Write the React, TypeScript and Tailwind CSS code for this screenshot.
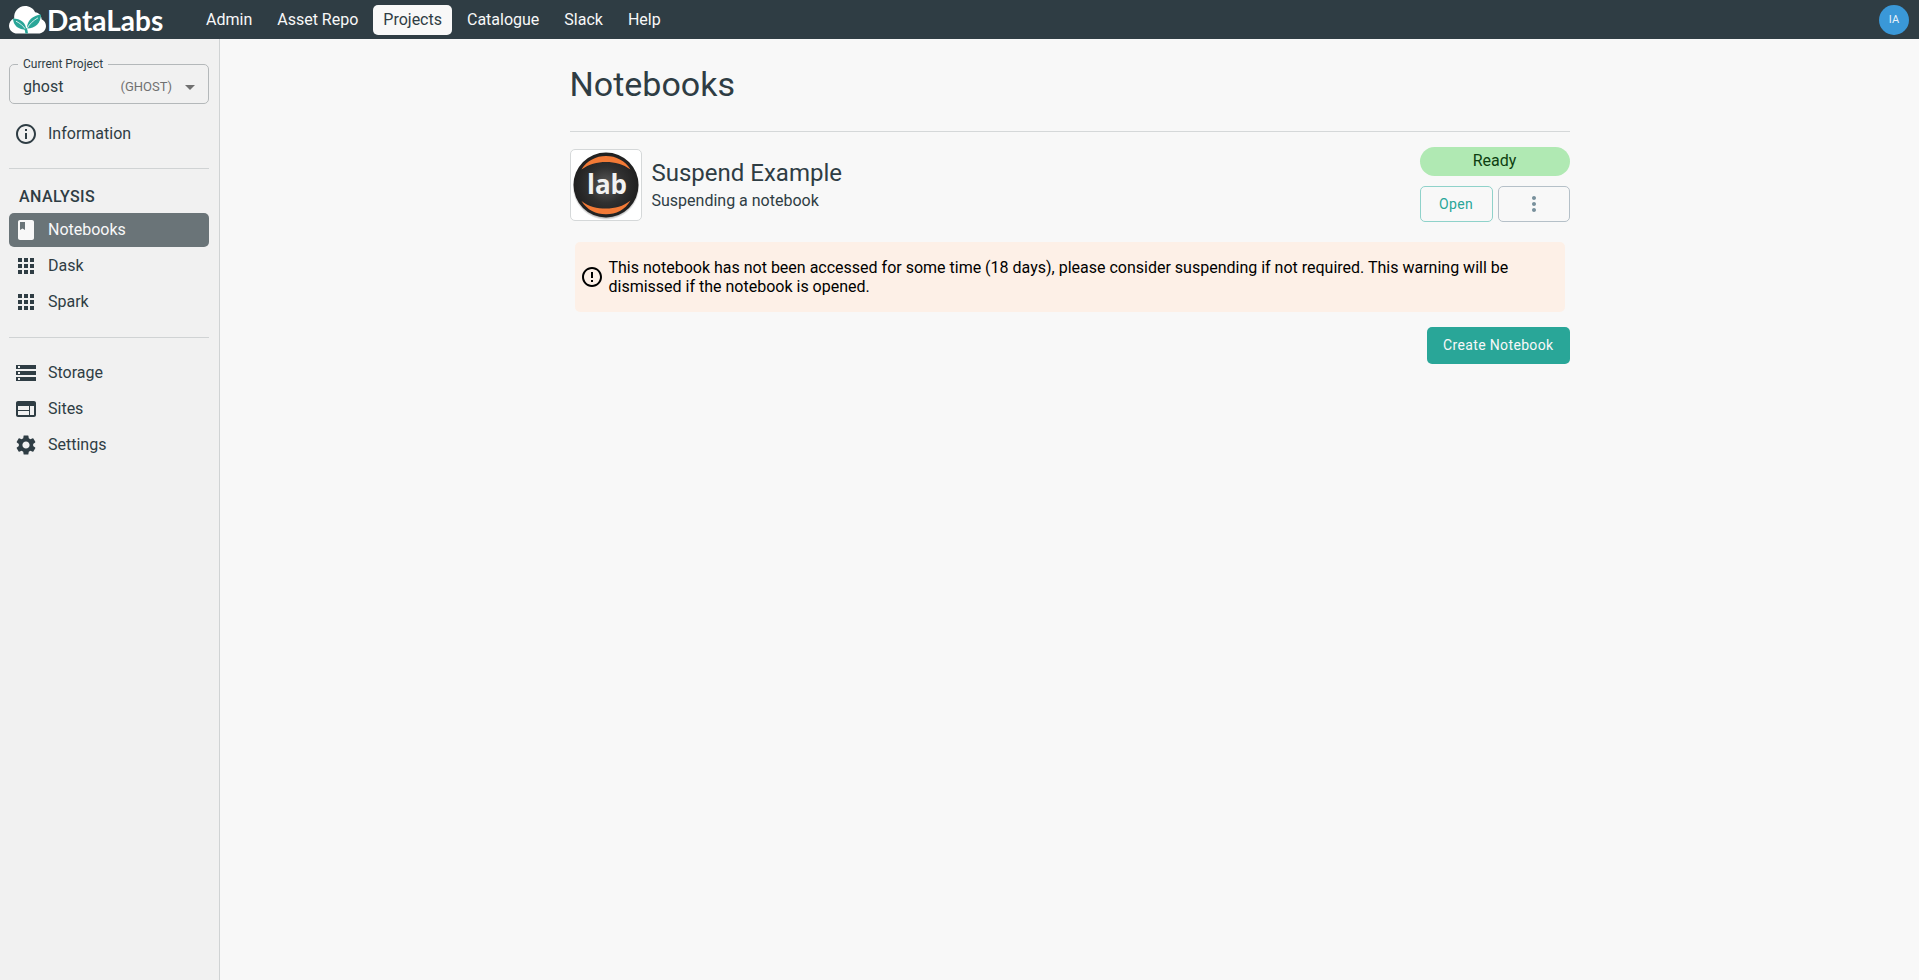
import React from "react";
import {
  MdApps,
  MdArrowDropDown,
  MdBook,
  MdErrorOutline,
  MdInfoOutline,
  MdMoreVert,
  MdSettings,
  MdStorage,
  MdWeb,
} from "react-icons/md";
import type { IconType } from "react-icons";

const topLinks = ["Admin", "Asset Repo", "Projects", "Catalogue", "Slack", "Help"];

function DataLabsLogo() {
  return (
    <a href="#home" aria-label="DataLabs" className="flex h-full w-[186px] shrink-0 items-center pl-[9px]">
      <svg viewBox="0 0 37 28" className="h-7 w-[37px] shrink-0" aria-hidden="true">
        <path
          fill="#fff"
          d="M8.5 27.6C3.7 27.6 0 24.200 0 19.800c0-3.600 2.100-6.300 5.200-7.400C4.600 5.600 9.300 0 16 0c4.600 0 8.300 2.300 10.100 6.200 3.900.4 6.400 3.300 6.500 7C35.400 14.500 37 17 37 20c0 4.300-3.400 7.600-8 7.600z"
        />
        <path fill="#29a698" d="M4 12.500c7.500.2 13 3.800 13.200 11.300C9.500 23.600 4.500 20 4 12.500z" />
        <path fill="#29a698" d="M32 8.500C24 9.700 17.800 14 18 22.600 26.500 22.400 31.800 17 32 8.500z" />
        <path d="M7 15.200c4 2 7.500 4.800 10 8.600M29 11.800c-5 3-8.500 6-11 10.800" stroke="#fff" strokeWidth=".8" fill="none" />
        <path d="M16.400 22.500c.9 1.500 1.300 3 1.300 5.100" stroke="#29a698" strokeWidth="2.600" fill="none" />
      </svg>
      <span className="ml-[1px] font-[Lato,sans-serif] text-[28px] font-bold leading-[30px] text-white">DataLabs</span>
    </a>
  );
}

function TopBar() {
  return (
    <header className="flex h-[39px] items-center bg-[#2f3d44] pr-[10px]">
      <DataLabsLogo />
      <nav aria-label="Main" className="ml-[10px] flex flex-1 items-center gap-[5px]">
        {topLinks.map((name) => (
          <a
            key={name}
            href={"#" + name.toLowerCase().replace(" ", "-")}
            aria-current={name === "Projects" ? "page" : undefined}
            className={
              name === "Projects"
                ? "rounded-[5px] bg-[#f8f8f8] px-[10px] py-[5px] leading-5 text-[#2f3d44]"
                : "rounded-[5px] px-[10px] py-[5px] leading-5 text-[#f8f8f8]"
            }
          >
            {name}
          </a>
        ))}
      </nav>
      <button
        type="button"
        aria-label="Account"
        className="flex size-[30px] items-center justify-center rounded-full bg-[#3a98d8] text-[11px] leading-[30px] text-[#e8f2fa]"
      >
        IA
      </button>
    </header>
  );
}

function SideLink({ icon: Icon, name, active = false }: { icon: IconType; name: string; active?: boolean }) {
  return (
    <a
      href={"#" + name.toLowerCase()}
      aria-current={active ? "page" : undefined}
      className={
        active
          ? "flex h-[34px] items-center gap-[10px] rounded-[5px] bg-[#6a7478] px-[5px] text-[#f8f8f8]"
          : "flex h-[34px] items-center gap-[10px] rounded-[5px] px-[5px] text-[#2f3d44]"
      }
    >
      <Icon className="size-6 shrink-0" aria-hidden="true" />
      <span className="leading-5">{name}</span>
    </a>
  );
}

function ProjectSelect() {
  return (
    <fieldset className="relative rounded-[5px] border border-[#b4b8ba] pl-2">
      <legend className="px-[5px] text-[12px] leading-[13px] text-[#2f3d44]">
        <label htmlFor="project">Current Project</label>
      </legend>
      <select
        id="project"
        defaultValue="ghost"
        className="h-8 w-full appearance-none bg-transparent pl-[5px] text-base text-[#2f3d44] outline-none"
      >
        <option value="ghost">ghost</option>
      </select>
      <span className="pointer-events-none absolute inset-y-0 right-[6px] flex items-center gap-[6px] text-[#707070]">
        <span className="text-[13px] leading-4">(GHOST)</span>
        <MdArrowDropDown className="size-6" aria-hidden="true" />
      </span>
    </fieldset>
  );
}

function Sidebar() {
  return (
    <aside className="w-[220px] shrink-0 border-r border-[#d0d3d4] bg-[#f1f1f1] pl-[9px] pr-[10px] pt-[19px]">
      <ProjectSelect />
      <nav aria-label="Project">
        <div className="pb-[17px] pt-[13px]">
          <SideLink icon={MdInfoOutline} name="Information" />
        </div>
        <div className="border-t border-[#d0d3d4] pb-[18px] pt-[17px]">
          <h2 className="pb-[6px] pl-[10px] font-medium leading-[21px] tracking-wide text-[#2f3d44]">ANALYSIS</h2>
          <div className="flex flex-col gap-[2px]">
            <SideLink icon={MdBook} name="Notebooks" active />
            <SideLink icon={MdApps} name="Dask" />
            <SideLink icon={MdApps} name="Spark" />
          </div>
        </div>
        <div className="flex flex-col gap-[2px] border-t border-[#d0d3d4] pt-[18px]">
          <SideLink icon={MdStorage} name="Storage" />
          <SideLink icon={MdWeb} name="Sites" />
          <SideLink icon={MdSettings} name="Settings" />
        </div>
      </nav>
    </aside>
  );
}

function JupyterLabLogo() {
  return (
    <svg viewBox="0 0 70 70" className="size-full" role="img" aria-label="JupyterLab">
      <defs>
        <radialGradient id="disc">
          <stop offset="0" stopColor="#5a5a5a" />
          <stop offset=".55" stopColor="#303030" />
          <stop offset="1" stopColor="#202020" />
        </radialGradient>
        <radialGradient id="shade">
          <stop offset=".88" stopColor="#888" />
          <stop offset="1" stopColor="#fff" />
        </radialGradient>
      </defs>
      <circle cx="35" cy="36.500" r="33.500" fill="url(#shade)" />
      <circle cx="35" cy="35" r="32.500" fill="url(#disc)" />
      <path d="M10.500 19.500C16 10.500 25 6 35 6s19 4.500 24.500 13.500C52 14.200 44 12 35 12s-17 2.200-24.500 7.500z" fill="#f37a36" />
      <path d="M10.500 51C16 60 25 64.300 35 64.300S54 60 59.500 50.500C52 56.500 44 58.500 35 58.500s-17-1.500-24.500-7.500z" fill="#f37a36" />
      <text x="36" y="44" textAnchor="middle" fill="#f2f2f2" className="font-['Open_Sans',sans-serif] text-[26px] font-bold">
        lab
      </text>
    </svg>
  );
}

function NotebookRow() {
  return (
    <li>
      <div className="flex items-center justify-between pt-[15px]">
        <div className="flex items-center gap-[10px]">
          <div className="size-[72px] shrink-0 rounded-[5px] border border-[#d5d8d9] bg-white">
            <JupyterLabLogo />
          </div>
          <div className="text-[#2f3d44]">
            <h2 className="text-2xl leading-8">Suspend Example</h2>
            <p className="leading-6">Suspending a notebook</p>
          </div>
        </div>
        <div className="w-[150px] shrink-0">
          <div className="h-[29px] rounded-full bg-[#b0e9b3] text-center leading-[27px] text-[#0d3f10]">Ready</div>
          <div className="mt-[10px] grid grid-cols-[73px_72px] gap-[5px]">
            <button
              type="button"
              className="h-9 rounded-[5px] border border-[#8fd2ca] text-sm font-normal tracking-wide text-[#29a698]"
            >
              Open
            </button>
            <button
              type="button"
              aria-label="More actions"
              className="flex h-9 items-center justify-center rounded-[5px] border border-[#b5c0c8] text-[#78909c]"
            >
              <MdMoreVert className="size-6" aria-hidden="true" />
            </button>
          </div>
        </div>
      </div>
      <div
        role="alert"
        className="mx-[5px] mt-5 flex h-[70px] items-center gap-[5px] rounded-[5px] bg-[#fdf0e7] px-[5px] text-black"
      >
        <MdErrorOutline className="size-6 shrink-0" aria-hidden="true" />
        <p className="pr-10 leading-[19px]">
          This notebook has not been accessed for some time (18 days), please consider suspending if not required. This
          warning will be dismissed if the notebook is opened.
        </p>
      </div>
    </li>
  );
}

export default function App() {
  return (
    <div className="flex min-h-screen flex-col bg-[#f8f8f8] font-[Roboto,sans-serif] text-base">
      <TopBar />
      <div className="flex flex-1">
        <Sidebar />
        <main className="flex-1">
          <div className="mx-auto max-w-[1000px] pt-[25px]">
            <h1 className="border-b border-[#d5d8d9] pb-[27px] text-[34px] leading-10 text-[#2f3d44]">Notebooks</h1>
            <ul>
              <NotebookRow />
            </ul>
            <div className="mt-[15px] flex justify-end">
              <button
                type="button"
                className="h-[37px] rounded-[5px] bg-[#29a698] px-4 pb-px text-sm font-normal tracking-wide text-[#f8f8f8]"
              >
                Create Notebook
              </button>
            </div>
          </div>
        </main>
      </div>
    </div>
  );
}
